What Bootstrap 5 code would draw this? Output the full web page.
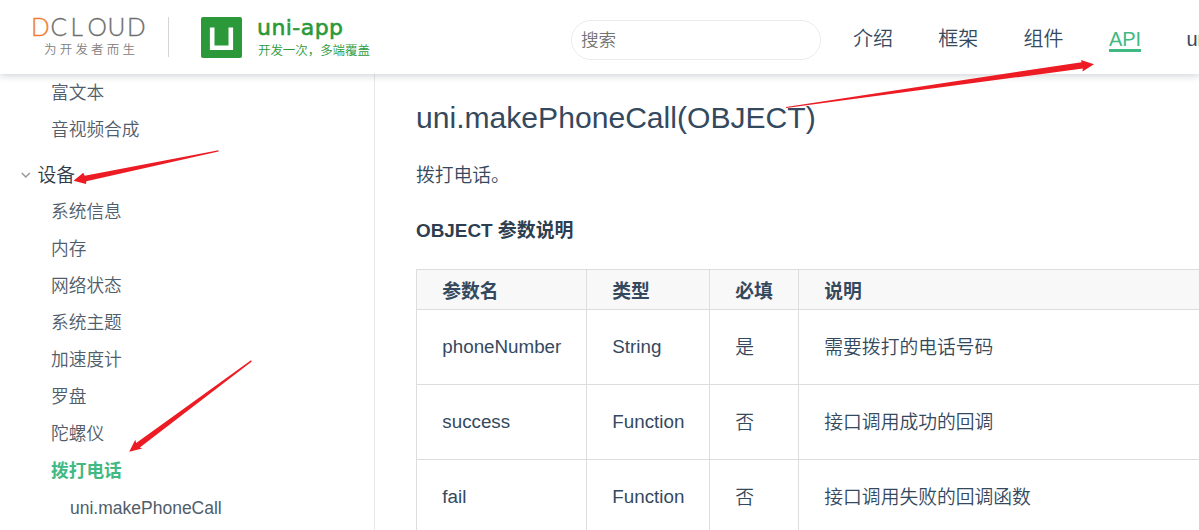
<!DOCTYPE html>
<html lang="zh-CN">
<head>
<meta charset="utf-8">
<meta name="viewport" content="width=device-width, initial-scale=1">
<title>uni.makePhoneCall - uni-app</title>
<link rel="stylesheet" href="https://cdn.jsdelivr.net/npm/bootstrap@5.3.0/dist/css/bootstrap.min.css">
<style>
  body { font-family: "Liberation Sans", "Noto Sans CJK SC", sans-serif; color: #34495e; height: 530px; font-weight: 350; }
  .topbar { height: 74px; flex: none; background: #fff; box-shadow: 0 1px 8px rgba(0, 20, 40, .22); z-index: 5; }
  .topbar > * { flex: none; }
  .brand-dcloud { margin: 17px 0 0 32px; }
  .brand-divider { width: 1px; height: 40px; background: #d5d5d5; margin: 17px 32px 0 20px; }
  .brand-mark { width: 41px; height: 41px; margin: 17px 16px 0 0; }
  .brand-name { margin-top: 15px; }
  .search-box { width: 250px; height: 40px; margin: 20px 0 0 199px; border: 1px solid #ebebeb; border-radius: 20px; padding: 0 9px; font-size: 17.6px; font-weight: 350; color: #757575; }
  .search-box::placeholder { color: #757575; opacity: 1; }
  .topbar .topnav { flex: 1 1 0; min-width: 0; overflow: hidden; margin: 25px 0 0 32px; gap: 45.3px; font-size: 20px; line-height: 29px; }
  .topnav .nav-link { flex: none; padding: 0; color: #34495e; border-bottom: 3px solid transparent; height: 27px; white-space: nowrap; }
  .topnav .nav-link.active { color: #42b983; border-color: #42b983; }
  .side { width: 375px; flex: none; border-right: 1px solid #e8e8e8; font-size: 17.7px; line-height: 37px; color: #505d6b; padding-top: 1px; }
  .side .nav-link { padding: 0 0 0 51px; color: inherit; }
  .side .nav-link.active { color: #42b983; font-weight: 700; }
  .side .sub { padding-left: 70px; font-size: 17.5px; }
  .side .group-title { margin-top: 8px; padding-left: 21px; gap: 6.5px; font-size: 18.8px; color: #2f3b4a; }
  .doc { padding: 0 0 0 41px; font-size: 18.8px; }
  .doc h1 { font-size: 30.1px; line-height: 40px; margin: 24px 0 0; font-weight: 400; }
  .doc p { line-height: 30px; margin: 23px 0 0; }
  .doc h4 { font-size: 18.9px; line-height: 30px; font-weight: 700; margin: 25px 0 23px; color: #2c3e50; }
  .params { width: 900px; table-layout: fixed; margin: 0; color: inherit; border-color: #ddd; }
  .params > :not(caption) > * > * { padding: 0 0 0 25.3px; color: inherit; border-color: #ddd; vertical-align: middle; }
  .params thead tr > th { height: 40px; background: #f8f8f8; line-height: 30px; padding-top: 5px; }
  .params tbody td { height: 75px; line-height: 30px; }
  .params tbody tr > td:nth-child(n+3) { padding-top: 2px; }
  .arrows { position: absolute; left: 0; top: 0; z-index: 10; pointer-events: none; }
</style>
</head>
<body class="d-flex flex-column overflow-hidden position-relative">
  <header class="topbar d-flex align-items-start position-relative">
    <svg class="brand-dcloud overflow-visible" width="116" height="42" role="img" aria-label="DCLOUD 为开发者而生">
      <text y="19" font-family="Lato, sans-serif" font-size="24.5" font-weight="300" fill="#6e6e6e" stroke="#6e6e6e" stroke-width=".3"><tspan x="-1" fill="#f07c30" stroke="#f07c30">D</tspan><tspan x="18.500 38.500 55.500 75.500 95">CLOUD</tspan></text>
      <text x="12" y="37" font-family="Noto Sans CJK SC, sans-serif" font-size="12.5" fill="#808080" textLength="91">为开发者而生</text>
    </svg>
    <div class="brand-divider"></div>
    <svg class="brand-mark" viewBox="0 0 41 41"><rect width="41" height="41" rx="2" fill="#2b9939"/><path d="M11.200 10.500v20.300h18.600v-20.300" fill="none" stroke="#fff" stroke-width="4.600"/></svg>
    <svg class="brand-name overflow-visible" width="114" height="44" role="img" aria-label="uni-app">
      <g fill="#2b9939"><text x="-1" y="19.5" font-family="DejaVu Sans, sans-serif" font-size="22" font-weight="400" stroke="#2b9939" stroke-width=".6" textLength="86">uni-app</text>
      <text x="0" y="39.5" font-family="Noto Sans CJK SC, sans-serif" font-size="12.500" font-weight="350" textLength="112">开发一次，多端覆盖</text></g>
    </svg>
    <input class="search-box" type="search" placeholder="搜索" aria-label="搜索">
    <nav class="topnav nav flex-nowrap">
      <a class="nav-link" href="#">介绍</a>
      <a class="nav-link" href="#">框架</a>
      <a class="nav-link" href="#">组件</a>
      <a class="nav-link active" href="#">API</a>
      <a class="nav-link" href="#">un</a>
    </nav>
  </header>
  <div class="d-flex flex-grow-1 overflow-hidden">
    <aside class="side">
      <nav class="nav flex-column flex-nowrap">
        <a class="nav-link" href="#">富文本</a>
        <a class="nav-link" href="#">音视频合成</a>
        <div class="group-title d-flex align-items-center">
          <svg width="10" height="7" viewBox="0 0 10 7" fill="none" stroke="#999" stroke-width="1.5"><path d="M.8 1l4 4 4-4"/></svg><span>设备</span>
        </div>
        <a class="nav-link" href="#">系统信息</a>
        <a class="nav-link" href="#">内存</a>
        <a class="nav-link" href="#">网络状态</a>
        <a class="nav-link" href="#">系统主题</a>
        <a class="nav-link" href="#">加速度计</a>
        <a class="nav-link" href="#">罗盘</a>
        <a class="nav-link" href="#">陀螺仪</a>
        <a class="nav-link active" href="#">拨打电话</a>
        <a class="nav-link sub" href="#">uni.makePhoneCall</a>
      </nav>
    </aside>
    <main class="doc flex-grow-1 overflow-hidden">
      <h1>uni.makePhoneCall(OBJECT)</h1>
      <p>拨打电话。</p>
      <h4>OBJECT 参数说明</h4>
      <table class="table table-bordered params">
        <colgroup><col style="width:170px"><col style="width:123px"><col style="width:89px"><col></colgroup>
        <thead><tr><th>参数名</th><th>类型</th><th>必填</th><th>说明</th></tr></thead>
        <tbody>
          <tr><td>phoneNumber</td><td>String</td><td>是</td><td>需要拨打的电话号码</td></tr>
          <tr><td>success</td><td>Function</td><td>否</td><td>接口调用成功的回调</td></tr>
          <tr><td>fail</td><td>Function</td><td>否</td><td>接口调用失败的回调函数</td></tr>
        </tbody>
      </table>
    </main>
  </div>
  <svg class="arrows" width="1199" height="530" fill="#ed1c24" aria-hidden="true">
    <path d="M786 106.900L1081.600 62.200L1081 60L1094 64.200L1082.500 71.500L1082.800 68.500L786 108z"/>
    <path d="M218.500 150.200L84.700 175.800L83.300 172.700L73.500 180.700L86 184L86.300 181.200L218.500 151.600z"/>
    <path d="M251 360.200L136.200 443L135.300 439.700L129.200 451.700L142.300 448.600L139.800 447.600L251.800 361.400z"/>
  </svg>
<script src="https://cdn.jsdelivr.net/npm/bootstrap@5.3.0/dist/js/bootstrap.bundle.min.js"></script>
</body>
</html>
